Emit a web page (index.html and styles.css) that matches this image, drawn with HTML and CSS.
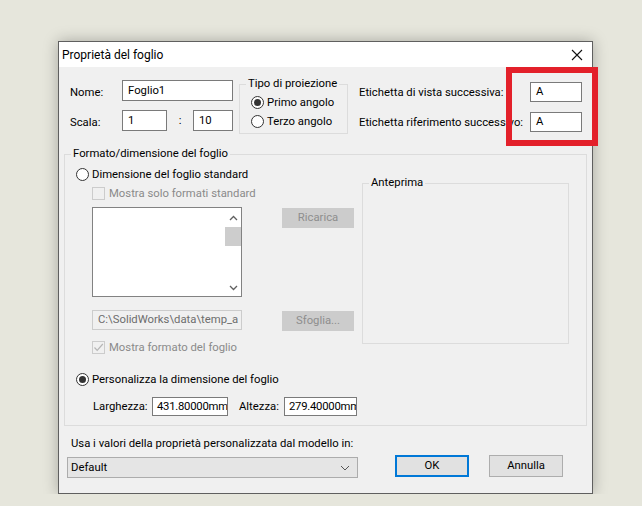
FILE: index.html
```html
<!DOCTYPE html>
<html lang="it">
<head>
  <meta charset="UTF-8">
  <title>Proprietà del foglio</title>
  <link rel="stylesheet" href="styles.css">
</head>
<body>
  <div class="dialog">
    <div class="titlebar">
      <span class="title">Proprietà del foglio</span>
      <svg class="close" width="12" height="12" viewBox="0 0 12 12">
        <path d="M1 1L11 11M11 1L1 11" stroke="#111" stroke-width="1.1" fill="none"/>
      </svg>
    </div>

    <div class="content">
      <div class="top">
        <div class="names">
          <span class="lbl">Nome:</span>
          <div class="field name">Foglio1</div>
          <span class="lbl">Scala:</span>
          <div class="scale">
            <div class="field s1">1</div>
            <span class="colon">:</span>
            <div class="field s2">10</div>
          </div>
        </div>

        <fieldset class="group tipo">
          <legend>Tipo di proiezione</legend>
          <div class="opt"><span class="radio on"></span>Primo angolo</div>
          <div class="opt"><span class="radio"></span>Terzo angolo</div>
        </fieldset>

        <div class="labels">
          <span class="lbl">Etichetta di vista successiva:</span>
          <div class="field tiny">A</div>
          <span class="lbl">Etichetta riferimento successivo:</span>
          <div class="field tiny">A</div>
        </div>
      </div>

      <fieldset class="group format">
        <legend>Formato/dimensione del foglio</legend>
        <div class="format-body">
          <div class="format-left">
            <div class="opt"><span class="radio"></span>Dimensione del foglio standard</div>
            <div class="opt sub off"><span class="check"></span>Mostra solo formati standard</div>

            <div class="pair list-row">
              <div class="listbox">
                <div class="scrollbar">
                  <svg width="9" height="6" viewBox="0 0 9 6"><path d="M1 5L4.5 1.5L8 5" stroke="#606060" stroke-width="1.3" fill="none"/></svg>
                  <div class="thumb"></div>
                  <div class="spacer"></div>
                  <svg width="9" height="6" viewBox="0 0 9 6"><path d="M1 1L4.5 4.5L8 1" stroke="#606060" stroke-width="1.3" fill="none"/></svg>
                </div>
              </div>
              <div class="btn dis">Ricarica</div>
            </div>

            <div class="pair path-row">
              <div class="field path">C:\SolidWorks\data\temp_a</div>
              <div class="btn dis">Sfoglia...</div>
            </div>

            <div class="opt sub off check-row">
              <span class="check">
                <svg width="11" height="11" viewBox="0 0 11 11"><path d="M1.5 5.5L4.2 8.4L9.8 2" stroke="#b5b5b5" stroke-width="1.2" fill="none"/></svg>
              </span>Mostra formato del foglio
            </div>

            <div class="opt custom"><span class="radio on"></span>Personalizza la dimensione del foglio</div>

            <div class="size-row">
              <span class="lbl">Larghezza:</span>
              <div class="field num">431.80000mm</div>
              <span class="lbl alt">Altezza:</span>
              <div class="field num narrow">279.40000mm</div>
            </div>
          </div>

          <fieldset class="group preview">
            <legend>Anteprima</legend>
          </fieldset>
        </div>
      </fieldset>

      <div class="bottom">
        <div class="model">
          <div class="model-label">Usa i valori della proprietà personalizzata dal modello in:</div>
          <div class="combo">
            <span>Default</span>
            <svg width="10" height="6" viewBox="0 0 10 6"><path d="M1 1L5 5L9 1" stroke="#555" stroke-width="1" fill="none"/></svg>
          </div>
        </div>
        <div class="buttons">
          <div class="btn ok">OK</div>
          <div class="btn">Annulla</div>
        </div>
      </div>
    </div>

    <div class="mark"></div>
  </div>
</body>
</html>
```

FILE: styles.css
```css
body {
  margin: 0;
  background-color: #e6e6dc;
  font-family: Roboto, "Noto Sans", sans-serif;
  font-size: 11.3px;
  color: #000;
}
.dialog {
  position: relative;
  box-sizing: border-box;
  width: 535px;
  height: 453px;
  margin: 41px 0 0 58px;
  background: #f0f0f0;
  border: 1px solid #5f5f5f;
  box-shadow: 0 0 14px rgba(0,0,0,0.28);
}
.titlebar {
  height: 25px;
  background: #fff;
  display: flex;
  align-items: center;
  justify-content: space-between;
  padding: 0 9px 0 3px;
}
.title {
  font-size: 12px;
}
.close {
  display: block;
}

/* shared controls */
.field {
  box-sizing: border-box;
  height: 21px;
  background: #fff;
  border: 1px solid #7a7a7a;
  padding: 0 5px;
  line-height: 19px;
  white-space: nowrap;
  overflow: hidden;
}
.lbl {
  white-space: nowrap;
}
.group {
  margin: 0;
  padding: 0;
  border: 1px solid #dcdcdc;
  min-width: 0;
}
.group legend {
  margin-left: 6px;
  padding: 0 2px;
  line-height: 14px;
  white-space: nowrap;
}
.opt {
  display: flex;
  align-items: center;
  height: 19px;
  white-space: nowrap;
}
.radio {
  box-sizing: border-box;
  width: 13px;
  height: 13px;
  border: 1px solid #333;
  border-radius: 50%;
  background: #fff;
  margin-right: 3px;
  display: flex;
  align-items: center;
  justify-content: center;
  flex: none;
}
.radio.on::after {
  content: "";
  width: 7px;
  height: 7px;
  border-radius: 50%;
  background: #333;
}
.check {
  box-sizing: border-box;
  width: 13px;
  height: 13px;
  border: 1px solid #cccccc;
  background: #f0f0f0;
  margin-right: 4px;
  display: flex;
  align-items: center;
  justify-content: center;
  flex: none;
}
.off {
  color: #8a8a8a;
}
.btn {
  box-sizing: border-box;
  width: 74px;
  height: 22px;
  background: #e1e1e1;
  border: 1px solid #adadad;
  text-align: center;
  line-height: 20px;
}
.btn.dis {
  width: 72px;
  height: 20px;
  line-height: 18px;
  background: #cccccc;
  border-color: #cccccc;
  color: #8e8e8e;
}
.btn.ok {
  border: 2px solid #0078d7;
  line-height: 18px;
}

/* top block */
.top {
  display: flex;
  align-items: flex-start;
  height: 66px;
}
.names {
  margin: 13px 0 0 11px;
  display: grid;
  grid-template-columns: 52px 111px;
  grid-auto-rows: 21px;
  row-gap: 9px;
}
.names .lbl {
  padding-top: 6px;
}
.scale {
  display: flex;
}
.s1 {
  width: 45px;
}
.colon {
  width: 26px;
  text-align: center;
  line-height: 21px;
}
.s2 {
  width: 40px;
}
.tipo {
  margin: 10px 0 0 6px;
  width: 109px;
  height: 57px;
  box-sizing: border-box;
  padding: 2px 0 0 11px;
}
.tipo legend {
  margin-left: -5px;
}
.labels {
  margin: 15px 0 0 11px;
  display: grid;
  grid-template-columns: 171px 52px;
  grid-auto-rows: 20px;
  row-gap: 10px;
}
.labels .lbl {
  line-height: 20px;
  padding-top: 1px;
}
.tiny {
  height: 20px;
  line-height: 18px;
}

/* sheet format */
.format {
  margin: 14px 0 0 5px;
  width: 523px;
  height: 279px;
  box-sizing: border-box;
}
.format-body {
  display: flex;
  align-items: flex-start;
  padding: 4px 0 0 11px;
}
.format-left {
  width: 278px;
}
.sub {
  padding-left: 16px;
}
.pair {
  display: flex;
  align-items: flex-start;
  padding-left: 16px;
}
.list-row {
  margin-top: 4px;
}
.listbox {
  box-sizing: border-box;
  width: 150px;
  height: 90px;
  background: #fff;
  border: 1px solid #828282;
  display: flex;
  justify-content: flex-end;
}
.scrollbar {
  width: 16px;
  display: flex;
  flex-direction: column;
  align-items: center;
  padding: 7px 0 5px;
  box-sizing: border-box;
}
.thumb {
  width: 16px;
  height: 19px;
  margin-top: 6px;
  background: #cdcdcd;
}
.spacer {
  flex: 1;
}
.pair .btn {
  margin: 1px 0 0 40px;
}
.path-row {
  margin-top: 13px;
}
.path {
  width: 150px;
  height: 20px;
  line-height: 18px;
  background: #f0f0f0;
  border-color: #cccccc;
  color: #6d6d6d;
}
.check-row {
  margin-top: 7px;
}
.custom {
  margin-top: 13px;
}
.size-row {
  display: flex;
  align-items: center;
  margin-top: 7px;
  padding-left: 17px;
}
.size-row > * {
  flex: none;
}
.size-row .lbl {
  width: 59px;
}
.size-row .alt {
  width: 45px;
  padding-left: 11px;
}
.num {
  width: 76px;
  height: 19px;
  line-height: 17px;
  padding: 0 0 0 4px;
  margin-top: 1px;
  letter-spacing: -0.25px;
}
.num.narrow {
  width: 73px;
}
.preview {
  margin: 11px 0 0 8px;
  width: 207px;
  height: 168px;
  box-sizing: border-box;
}

/* bottom */
.bottom {
  display: flex;
  align-items: flex-end;
  padding-left: 8px;
}
.model {
  width: 291px;
}
.model-label {
  padding: 10px 0 0 4px;
  line-height: 16px;
  white-space: nowrap;
}
.combo {
  box-sizing: border-box;
  width: 291px;
  height: 21px;
  margin-top: 5px;
  background: #e5e5e5;
  border: 1px solid #acacac;
  display: flex;
  align-items: center;
  justify-content: space-between;
  padding: 0 7px 0 3px;
}
.buttons {
  display: flex;
  gap: 20px;
  margin: 0 0 1px 37px;
}

/* red annotation frame drawn over the dialog */
.mark {
  position: absolute;
  left: 447px;
  top: 25px;
  width: 92px;
  height: 79px;
  box-sizing: border-box;
  border: 6px solid #e3202a;
}
```
